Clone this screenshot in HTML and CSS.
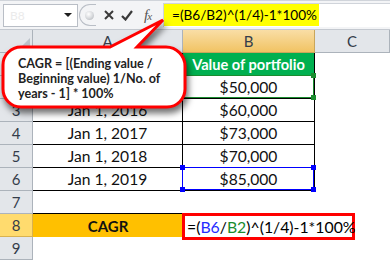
FILE: index.html
```html
<!DOCTYPE html>
<html lang="en">

<head>
    <meta charset="UTF-8">
    <meta name="viewport" content="width=device-width, initial-scale=1.0">
    <link rel="stylesheet" href="styles.css">
    <title>CAGR</title>
</head>

<body>

    <div class="sheet">
        <div class="fbar">
            <div class="namebox">
                <span class="nbText">B8</span>
                <span class="nbArrow"></span>
            </div>
            <div class="grip"><span></span></div>
            <svg class="fbtn btnX" width="10" height="10" viewBox="0 0 10 10">
                <path d="M1 1 L9 9 M9 1 L1 9" stroke="#3a3a3a" stroke-width="2" fill="none" />
            </svg>
            <svg class="fbtn btnOk" width="12" height="11" viewBox="0 0 12 11">
                <path d="M1 6 L4.5 9.5 L11 1" stroke="#3a3a3a" stroke-width="2.2" fill="none" />
            </svg>
            <div class="fbtn btnFx"><i>f</i><i class="sub">x</i></div>
            <div class="finput">
                <span class="fhl">=(B6/B2)^(1/4)-1*100%</span>
            </div>
        </div>

        <div class="grid">
            <div class="hd corner"><span></span></div>
            <div class="hd">A</div>
            <div class="hd sel">B</div>
            <div class="hd">C</div>

            <!-- rows 1 and 2 sit under the callout -->
            <div class="hd"></div>
            <div class="c t green"></div>
            <div class="c t green">Value of portfolio</div>
            <div class="c"></div>

            <div class="hd"></div>
            <div class="c t"></div>
            <div class="c t mark">$50,000
                <div class="box boxGreen"><span class="h tr"></span><span class="h br"></span></div>
            </div>
            <div class="c"></div>

            <div class="hd">3</div>
            <div class="c t">Jan 1, 2016</div>
            <div class="c t">$60,000</div>
            <div class="c"></div>

            <div class="hd">4</div>
            <div class="c t">Jan 1, 2017</div>
            <div class="c t">$73,000</div>
            <div class="c"></div>

            <div class="hd">5</div>
            <div class="c t">Jan 1, 2018</div>
            <div class="c t">$70,000</div>
            <div class="c"></div>

            <div class="hd">6</div>
            <div class="c t">Jan 1, 2019</div>
            <div class="c t mark">$85,000
                <div class="box boxBlue">
                    <span class="h tl"></span><span class="h tr"></span>
                    <span class="h bl"></span><span class="h br"></span>
                </div>
            </div>
            <div class="c"></div>

            <div class="hd">7</div>
            <div class="c lineBottom"></div>
            <div class="c"></div>
            <div class="c"></div>

            <div class="hd selRow">8</div>
            <div class="c cagr">CAGR</div>
            <div class="c mark">
                <div class="edit">=(<span class="refBlue">B6</span>/<span class="refGreen">B2</span>)^(1/4)-1*100%</div>
            </div>
            <div class="c"></div>

            <div class="hd">9</div>
            <div class="c"></div>
            <div class="c"></div>
            <div class="c"></div>
        </div>

        <div class="callout">
            <svg width="200" height="125" viewBox="0 0 200 125">
                <path d="M21 47 H110 L163 20 L137 47 H166 A19 19 0 0 1 185 66 V89 A18 18 0 0 1 167 107 H21 A18 18 0 0 1 3 89 V65 A18 18 0 0 1 21 47 Z"
                    fill="#fff" stroke="#ff0000" stroke-width="3" stroke-linejoin="miter" />
            </svg>
            <div class="calloutText">
                CAGR = [(Ending value /<br>
                Beginning value) 1/No. of<br>
                years - 1] * 100%
            </div>
        </div>
    </div>

</body>

</html>
```

FILE: styles.css
```css
* {
    margin: 0;
    padding: 0;
    box-sizing: border-box;
}

body {
    width: 390px;
    height: 261px;
    overflow: hidden;
    background: #fff;
    font-family: Lato, "Liberation Sans", sans-serif;
}

.sheet {
    position: relative;
    width: 390px;
    height: 261px;
}

/* formula bar */
.fbar {
    height: 30px;
    display: flex;
    align-items: center;
    padding-left: 3px;
    background: #f3f4f6;
    border-top: 1px solid #d0d4da;
    border-bottom: 1px solid #c4c9d0;
}

.namebox {
    width: 75px;
    height: 23px;
    display: flex;
    align-items: center;
    justify-content: space-between;
    padding: 0 5px 0 6px;
    background: #fff;
    border: 1px solid #b9bec6;
}

.nbText {
    font-size: 12px;
    color: #ebebeb;
}

.nbArrow {
    width: 0;
    height: 0;
    border-left: 4px solid transparent;
    border-right: 4px solid transparent;
    border-top: 4px solid #1e1e1e;
}

.grip {
    width: 17px;
    height: 22px;
    margin-left: 1px;
    display: flex;
    align-items: center;
    padding-left: 5px;
    border: 1px solid #b9bec6;
    border-right: none;
    border-radius: 11px 0 0 11px;
}

.grip span {
    width: 9px;
    height: 9px;
    border-radius: 50%;
    background: radial-gradient(circle at 40% 35%, #fff 0, #d9dbde 50%, #a9adb3 100%);
}

.fbtn {
    flex-shrink: 0;
}

.btnX {
    margin-left: 8px;
}

.btnOk {
    margin-left: 7px;
}

.btnFx {
    width: 14px;
    margin-left: 11px;
    font-family: "Liberation Serif", serif;
    font-size: 15px;
    color: #555;
    line-height: 1;
}

.btnFx .sub {
    font-size: 11px;
    margin-left: -1px;
}

.finput {
    flex: 1;
    height: 24px;
    margin-left: 5px;
    background: #fff;
    border-top: 1px solid #d0d4da;
    border-left: 1px solid #d0d4da;
}

.fhl {
    display: inline-block;
    width: 155px;
    height: 22px;
    padding-left: 8px;
    background: #ffff00;
    font-size: 13.6px;
    line-height: 22px;
    color: #000;
}

/* grid */
.grid {
    display: grid;
    grid-template-columns: 33px 150px 132px 75px;
    grid-auto-rows: 23px;
}

.hd {
    display: flex;
    align-items: center;
    justify-content: center;
    background: #e3e6ea;
    border-right: 1px solid #acb3bb;
    border-bottom: 1px solid #acb3bb;
    font-size: 15px;
    color: #343d4a;
}

.hd.sel {
    background: linear-gradient(#f9dea6, #f1c363);
    border-color: #c9a65b;
}

.hd.selRow {
    background: #ffdb6e;
    border-color: #d9b24f;
}

.corner {
    align-items: flex-end;
    justify-content: flex-end;
    padding: 0 2px 3px 0;
}

.corner span {
    width: 0;
    height: 0;
    border-left: 11px solid transparent;
    border-bottom: 11px solid #bcc2ca;
}

.c {
    display: flex;
    align-items: center;
    justify-content: center;
    font-size: 15.6px;
    color: #111;
}

.t {
    border-right: 1px solid #000;
    border-bottom: 1px solid #000;
}

.green {
    background: #00b050;
    color: #fff;
    font-weight: bold;
    font-size: 14.6px;
}

.lineBottom {
    border-bottom: 1px solid #000;
}

.cagr {
    background: #ffc000;
    font-weight: bold;
    font-size: 15px;
    color: #111;
}

.mark {
    position: relative;
}

/* selection boxes */
.box {
    position: absolute;
    top: -1px;
    left: -1px;
    right: 0;
    bottom: 0;
    border: 1px solid;
}

.boxGreen {
    border-color: #1a8c2f;
}

.boxBlue {
    border-color: #0000ff;
}

.h {
    position: absolute;
    width: 5px;
    height: 5px;
}

.boxGreen .h {
    background: #1a8c2f;
}

.boxBlue .h {
    background: #0000ff;
}

.h.tl {
    top: -3px;
    left: -3px;
}

.h.tr {
    top: -3px;
    right: -3px;
}

.h.bl {
    bottom: -3px;
    left: -3px;
}

.h.br {
    bottom: -3px;
    right: -3px;
}

.edit {
    position: absolute;
    top: -1px;
    left: -1px;
    width: 173px;
    height: 27px;
    padding-left: 2px;
    background: #fff;
    border: 3px solid #ff0000;
    font-size: 15.8px;
    line-height: 21px;
    color: #000;
    white-space: nowrap;
    z-index: 2;
}

.refBlue {
    color: #1f2cff;
}

.refGreen {
    color: #1a8c2f;
}

/* callout */
.callout {
    position: absolute;
    left: 0;
    top: 0;
    width: 200px;
    height: 125px;
    z-index: 3;
}

.callout svg {
    position: absolute;
    left: 0;
    top: 0;
    filter: drop-shadow(2px 5px 3px rgba(0, 0, 0, 0.55));
}

.calloutText {
    position: absolute;
    left: 18px;
    top: 56px;
    font-size: 12.6px;
    font-weight: bold;
    line-height: 15px;
    color: #222;
    white-space: nowrap;
}
```
